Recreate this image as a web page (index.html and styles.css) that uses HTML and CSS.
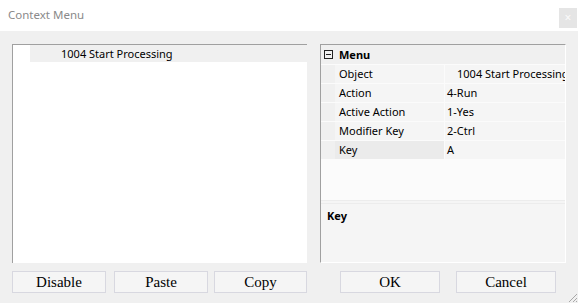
FILE: index.html
```html
<!DOCTYPE html>
<html lang="en">
<head>
    <meta charset="UTF-8">
    <title>Context Menu</title>
    <link rel="stylesheet" href="styles.css">
</head>
<body>
    <div class="window">
        <div class="titlebar">
            <span class="title">Context Menu</span>
            <span class="close">&times;</span>
        </div>

        <div class="content">
            <div class="panels">
                <div class="tree">
                    <div class="tree-row">1004 Start Processing</div>
                </div>

                <div class="props">
                    <div class="grid">
                        <div class="row category">
                            <span class="margin">
                                <svg width="9" height="9" viewBox="0 0 9 9">
                                    <rect x="0.5" y="0.5" width="8" height="8" fill="none" stroke="#222"/>
                                    <line x1="2" y1="4.5" x2="7" y2="4.5" stroke="#222"/>
                                </svg>
                            </span>
                            <span class="cat-name">Menu</span>
                        </div>
                        <div class="row">
                            <span class="margin"></span>
                            <span class="name">Object</span>
                            <span class="value indent">1004 Start Processing</span>
                        </div>
                        <div class="row">
                            <span class="margin"></span>
                            <span class="name">Action</span>
                            <span class="value">4-Run</span>
                        </div>
                        <div class="row">
                            <span class="margin"></span>
                            <span class="name">Active Action</span>
                            <span class="value">1-Yes</span>
                        </div>
                        <div class="row">
                            <span class="margin"></span>
                            <span class="name">Modifier Key</span>
                            <span class="value">2-Ctrl</span>
                        </div>
                        <div class="row">
                            <span class="margin"></span>
                            <span class="name selected">Key</span>
                            <span class="value">A</span>
                        </div>
                    </div>
                    <div class="splitter"></div>
                    <div class="description">
                        <div class="desc-title">Key</div>
                    </div>
                </div>
            </div>

            <div class="buttons">
                <div class="btn-group left">
                    <button class="btn w94">Disable</button>
                    <button class="btn w94 gap8">Paste</button>
                    <button class="btn w93 gap6">Copy</button>
                </div>
                <div class="btn-group right">
                    <button class="btn w100">OK</button>
                    <button class="btn w100 gap16">Cancel</button>
                </div>
            </div>
        </div>

        <svg class="grip" width="12" height="12" viewBox="0 0 12 12">
            <line x1="11" y1="3" x2="3" y2="11" stroke="#a8a8a8"/>
            <line x1="11" y1="7" x2="7" y2="11" stroke="#a8a8a8"/>
            <line x1="11" y1="10" x2="10" y2="11" stroke="#a8a8a8"/>
        </svg>
    </div>
</body>
</html>
```

FILE: styles.css
```css
* {
    box-sizing: border-box;
}
body {
    margin: 0;
    font-family: 'Noto Sans', 'Open Sans', sans-serif;
    font-size: 11px;
    color: #000;
    background-color: #f0f0f0;
}
.window {
    position: relative;
    width: 578px;
    height: 303px;
    background-color: #f0f0f0;
    overflow: hidden;
}
.titlebar {
    height: 31px;
    background-color: white;
    display: flex;
    align-items: flex-start;
    justify-content: space-between;
}
.title {
    margin: 7px 0 0 8px;
    font-size: 11.5px;
    color: #8a8a8a;
}
.close {
    margin: 8px 1px 0 0;
    width: 18px;
    height: 20px;
    background-color: #e5e5e5;
    color: #fafafa;
    font-size: 12px;
    line-height: 20px;
    text-align: center;
}
.content {
    padding: 13px 0 0 12px;
}
.panels {
    display: flex;
    height: 219px;
}
.tree {
    width: 295px;
    background-color: white;
    border-left: 1px solid #a0a0a0;
    border-top: 1px solid #a0a0a0;
}
.tree-row {
    margin-left: 17px;
    height: 17px;
    line-height: 17px;
    padding-left: 31px;
    background-color: #f0f0f0;
}
.props {
    width: 246px;
    margin-left: 13px;
    display: flex;
    flex-direction: column;
    background-color: #f5f5f5;
    border-left: 1px solid #a0a0a0;
    border-top: 1px solid #a0a0a0;
    border-right: 1px solid white;
    border-bottom: 1px solid white;
}
.grid {
    height: 155px;
    display: flex;
    flex-direction: column;
    gap: 1px;
    background-color: #fbfbfb;
}
.row {
    display: flex;
    gap: 1px;
    height: 18px;
    line-height: 18px;
}
.row.category {
    height: 19px;
    line-height: 19px;
    background-color: #f0f0f0;
}
.margin {
    width: 14px;
    flex: none;
    background-color: #f0f0f0;
    display: flex;
    align-items: center;
    justify-content: center;
    margin-right: -1px;
}
.margin svg {
    margin-left: 1px;
}
.cat-name {
    padding-left: 4px;
    font-weight: bold;
}
.name {
    width: 109px;
    flex: none;
    padding-left: 4px;
    background-color: #f5f5f5;
}
.name.selected {
    background-color: #ebebeb;
}
.value {
    flex: 1;
    padding-left: 2px;
    background-color: #f5f5f5;
    white-space: nowrap;
    overflow: hidden;
}
.value.indent {
    padding-left: 12px;
}
.splitter {
    height: 4px;
    border-top: 1px solid #ececec;
    border-bottom: 1px solid #ececec;
}
.description {
    flex: 1;
    padding: 4px 6px;
}
.desc-title {
    font-weight: bold;
}
.buttons {
    display: flex;
    margin-top: 8px;
}
.btn-group {
    display: flex;
}
.btn-group.right {
    margin-left: 33px;
}
.btn {
    height: 22px;
    padding: 0;
    font-family: 'Liberation Serif', serif;
    font-size: 15px;
    color: black;
    background-color: #f5f5f5;
    border: 1px solid #d8d8e0;
}
.w94 { width: 94px; }
.w93 { width: 93px; }
.w100 { width: 100px; }
.gap8 { margin-left: 8px; }
.gap6 { margin-left: 6px; }
.gap16 { margin-left: 16px; }
.grip {
    position: absolute;
    right: 0;
    bottom: 0;
}
```
